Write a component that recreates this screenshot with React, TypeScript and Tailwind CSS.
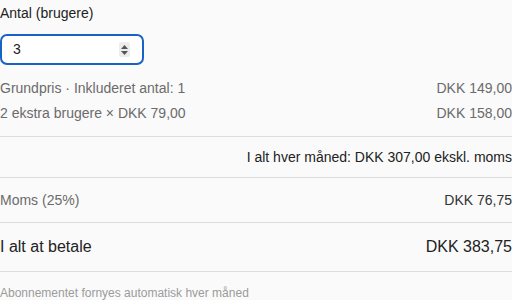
export default function App() {
  const font = { fontFamily: '"Liberation Sans", Arial, sans-serif' };
  return (
    <div className="w-[512px] h-[300px] bg-[#fafafa] overflow-hidden" style={font}>
      <label className="block pt-[3px] text-[14px] leading-[20px] text-[#222]">Antal (brugere)</label>
      <div className="mt-[11px] flex h-[31px] w-[144px] items-center rounded-[7px] border-2 border-[#1862c4] bg-white pl-[11px] pr-[12px]">
        <span className="flex-1 text-[14px] text-[#222]">3</span>
        <span className="flex h-[15px] w-[11px] flex-col items-center justify-center gap-[2px] rounded-[2px] bg-[#ececec]">
          <svg width="7" height="4" viewBox="0 0 7 4">
            <path d="M3.5 0L7 4H0z" fill="#555" />
          </svg>
          <svg width="7" height="4" viewBox="0 0 7 4">
            <path d="M0 0h7L3.5 4z" fill="#555" />
          </svg>
        </span>
      </div>

      <div className="mt-[11px] border-b border-[#dddddd] pb-[10px] text-[14px] text-[#6b6b6b]">
        <div className="flex h-[25px] items-center justify-between">
          <span>Grundpris · Inkluderet antal: 1</span>
          <span>DKK 149,00</span>
        </div>
        <div className="flex h-[25px] items-center justify-between">
          <span>2 ekstra brugere × DKK 79,00</span>
          <span>DKK 158,00</span>
        </div>
      </div>

      <div className="flex h-[41px] items-center justify-end border-b border-[#dddddd] text-[14px] text-[#222]">
        I alt hver måned: DKK 307,00 ekskl. moms
      </div>

      <div className="flex h-[45px] items-center justify-between border-b border-[#dddddd] text-[14px]">
        <span className="text-[#6b6b6b]">Moms (25%)</span>
        <span className="text-[#333]">DKK 76,75</span>
      </div>

      <div className="flex h-[49px] items-center justify-between border-b border-[#dddddd] text-[16px] text-[#222]">
        <span>I alt at betale</span>
        <span>DKK 383,75</span>
      </div>

      <p className="pt-[13px] text-[12px] leading-[16px] text-[#9a9a9a]">Abonnementet fornyes automatisk hver måned</p>
    </div>
  );
}
